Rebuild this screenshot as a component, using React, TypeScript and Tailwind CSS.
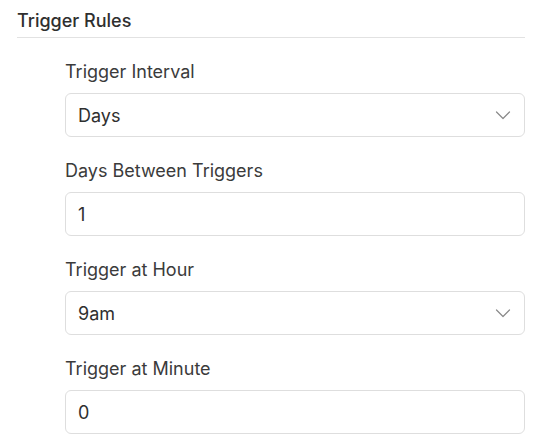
import React from "react";

type Field = { label: string; value: string; select?: boolean };

const fields: Field[] = [
  { label: "Trigger Interval", value: "Days", select: true },
  { label: "Days Between Triggers", value: "1" },
  { label: "Trigger at Hour", value: "9am", select: true },
  { label: "Trigger at Minute", value: "0" },
];

const Chevron = () => (
  <svg width="16" height="16" viewBox="0 0 16 16" fill="none" className="text-[#8a8a8a]">
    <path d="M1.5 5l6.5 6.5L14.5 5" stroke="currentColor" strokeWidth="1.2" strokeLinecap="round" strokeLinejoin="round" />
  </svg>
);

const App: React.FC = () => {
  return (
    <div className="w-[536px] h-[446px] bg-white overflow-hidden pl-[17px] pr-[11px] pt-[8px] font-['Inter',sans-serif]">
      <div className="border-b border-[#e2e2e2] pb-[4px]">
        <h2 className="text-[18px] leading-[25px] font-medium text-[#2f2f2f]">Trigger Rules</h2>
      </div>

      <div className="ml-[48px] mt-[22px] flex flex-col gap-[22px]">
        {fields.map((f) => (
          <div key={f.label} className="flex flex-col gap-[9px]">
            <label className="text-[18px] leading-[24px] text-[#3b3b3b]">{f.label}</label>
            <div className="h-[44px] rounded-[6px] border border-[#dedede] bg-white flex items-center justify-between pl-[12px] pr-[13px]">
              <span className="text-[18px] text-[#2f2f2f]">{f.value}</span>
              {f.select && <Chevron />}
            </div>
          </div>
        ))}
      </div>
    </div>
  );
};

export default App;
